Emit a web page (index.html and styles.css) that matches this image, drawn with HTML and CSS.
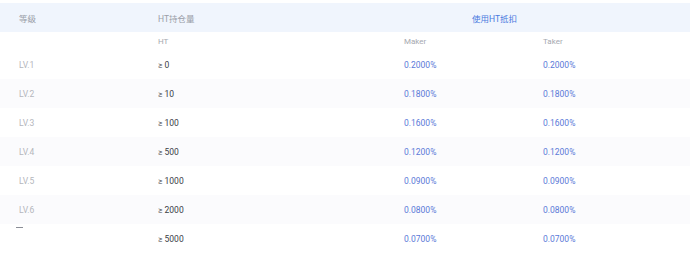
FILE: index.html
```html
<!DOCTYPE html>
<html lang="zh">
<head>
<meta charset="utf-8">
<link rel="stylesheet" href="styles.css">
</head>
<body>
<div class="wrap">
  <table class="fees">
    <colgroup>
      <col class="c1"><col class="c2"><col class="c3"><col class="c4">
    </colgroup>
    <thead>
      <tr class="head">
        <th class="lvl">等级</th>
        <th class="hold">HT持仓量</th>
        <th class="use" colspan="2">使用HT抵扣</th>
      </tr>
      <tr class="sub">
        <th></th>
        <th>HT</th>
        <th>Maker</th>
        <th>Taker</th>
      </tr>
    </thead>
    <tbody>
      <tr><td class="lv">LV.1</td><td class="amt">≥ 0</td><td class="pct">0.2000%</td><td class="pct">0.2000%</td></tr>
      <tr class="alt"><td class="lv">LV.2</td><td class="amt">≥ 10</td><td class="pct">0.1800%</td><td class="pct">0.1800%</td></tr>
      <tr><td class="lv">LV.3</td><td class="amt">≥ 100</td><td class="pct">0.1600%</td><td class="pct">0.1600%</td></tr>
      <tr class="alt"><td class="lv">LV.4</td><td class="amt">≥ 500</td><td class="pct">0.1200%</td><td class="pct">0.1200%</td></tr>
      <tr><td class="lv">LV.5</td><td class="amt">≥ 1000</td><td class="pct">0.0900%</td><td class="pct">0.0900%</td></tr>
      <tr class="alt"><td class="lv">LV.6</td><td class="amt">≥ 2000</td><td class="pct">0.0800%</td><td class="pct">0.0800%</td></tr>
      <tr><td class="lv"><span class="dash"></span></td><td class="amt">≥ 5000</td><td class="pct">0.0700%</td><td class="pct">0.0700%</td></tr>
    </tbody>
  </table>
</div>
</body>
</html>
```

FILE: styles.css
```css
html, body {
  margin: 0;
  padding: 0;
  background: #ffffff;
}
.wrap {
  padding-top: 3px;
  width: 690px;
}
.fees {
  width: 690px;
  border-collapse: collapse;
  table-layout: fixed;
  font-family: Roboto, "Noto Sans CJK SC", sans-serif;
  font-size: 8.5px;
}
.c1 { width: 139px; }
.c2 { width: 246px; }
.c3 { width: 139px; }
.c4 { width: 166px; }
th, td {
  text-align: left;
  font-weight: 400;
  padding: 0;
  white-space: nowrap;
}
.head {
  height: 29px;
  background: #f0f5fd;
}
.head th { color: #9a9ea8; }
.head .lvl { padding-left: 19px; }
.head .hold { padding-left: 19px; }
.head .use {
  color: #4a7ae0;
  padding-left: 87px;
}
.sub { height: 18px; }
.sub th {
  color: #a6a9b0;
  padding-left: 19px;
  font-size: 8px;
}
tbody tr { height: 29px; }
tbody tr.alt { background: #fbfbfd; }
td { padding-left: 19px; vertical-align: middle; }
.lv { color: #b4b6bc; }
.amt { color: #3a3d45; }
.pct { color: #5a79d8; }
.dash {
  display: inline-block;
  width: 7px;
  height: 1px;
  background: #8a8d96;
  vertical-align: top;
  margin-top: -7px;
  margin-left: -3px;
}
```
